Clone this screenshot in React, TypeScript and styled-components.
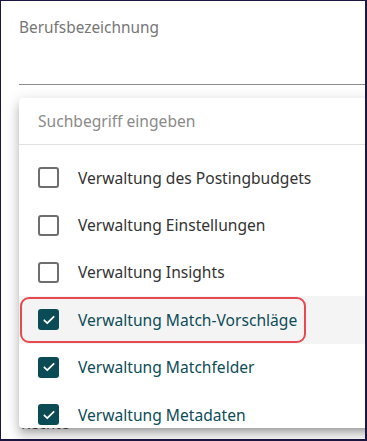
import React from 'react';
import styled, { createGlobalStyle } from 'styled-components';

const GlobalStyle = createGlobalStyle`
  html, body {
    margin: 0;
    padding: 0;
    background: #ffffff;
  }
  body {
    font-family: "Noto Sans", "Open Sans", sans-serif;
  }
`;

const Frame = styled.div`
  position: relative;
  width: 367px;
  height: 441px;
  box-sizing: border-box;
  border: 1px solid #1c1540;
  border-right-width: 2px;
  border-bottom-width: 2px;
  overflow: hidden;
  background: #fff;
`;

const Field = styled.div`
  padding: 17px 0 0 18px;
`;

const FieldLabel = styled.div`
  font-size: 15.4px;
  line-height: 20px;
  color: #767676;
`;

const Underline = styled.div`
  margin-top: 46px;
  height: 1px;
  background: #8c8c8c;
`;

const NextField = styled.div`
  padding: 328px 0 0 20px;
  font-size: 15px;
  line-height: 20px;
  color: #555;
`;

const Dropdown = styled.div`
  position: absolute;
  top: 97px;
  left: 18px;
  width: 370px;
  height: 330px;
  background: #fff;
  border-radius: 4px;
  overflow: hidden;
  box-shadow: 0 5px 5px -3px rgba(0, 0, 0, 0.2),
    0 8px 10px 1px rgba(0, 0, 0, 0.14), 0 3px 14px 2px rgba(0, 0, 0, 0.12);
`;

const Search = styled.div`
  height: 46px;
  display: flex;
  align-items: center;
  padding-left: 19px;
  font-size: 15.6px;
  color: #8a8a8a;
  border-bottom: 1px solid #e2e2e2;
`;

const List = styled.ul`
  list-style: none;
  margin: 0;
  padding: 9px 0 0;
`;

const Item = styled.li<{ $checked: boolean; $active?: boolean }>`
  position: relative;
  height: 47.4px;
  display: flex;
  align-items: center;
  gap: 19px;
  padding-left: 19px;
  font-size: 15.6px;
  color: ${p => (p.$checked ? '#0d4c57' : '#333333')};
  background: ${p => (p.$active ? '#f4f4f4' : 'transparent')};
`;

const Box = styled.span<{ $checked: boolean }>`
  width: 21px;
  height: 21px;
  box-sizing: border-box;
  border-radius: 3px;
  display: flex;
  align-items: center;
  justify-content: center;
  flex-shrink: 0;
  border: ${p => (p.$checked ? 'none' : '2px solid #6e6e6e')};
  background: ${p => (p.$checked ? '#0b4b55' : '#fff')};
`;

const Annotation = styled.span`
  position: absolute;
  left: 1px;
  top: 1px;
  width: 286px;
  height: 46px;
  box-sizing: border-box;
  border: 2.5px solid #e64a4f;
  border-radius: 9px;
  pointer-events: none;
`;

const Check = () => (
  <svg width="14" height="14" viewBox="0 0 24 24" fill="none">
    <path d="M4 12.5l5 5L20 6.5" stroke="#fff" strokeWidth="3" strokeLinecap="round" strokeLinejoin="round" />
  </svg>
);

const options = [
  { label: 'Verwaltung des Postingbudgets', checked: false },
  { label: 'Verwaltung Einstellungen', checked: false },
  { label: 'Verwaltung Insights', checked: false },
  { label: 'Verwaltung Match-Vorschläge', checked: true, active: true },
  { label: 'Verwaltung Matchfelder', checked: true },
  { label: 'Verwaltung Metadaten', checked: true },
];

export default function App() {
  return (
    <>
      <GlobalStyle />
      <Frame>
        <Field>
          <FieldLabel>Berufsbezeichnung</FieldLabel>
          <Underline />
        </Field>
        <NextField>Rechte</NextField>

        <Dropdown>
          <Search>Suchbegriff eingeben</Search>
          <List>
            {options.map(o => (
              <Item key={o.label} $checked={o.checked} $active={o.active}>
                <Box $checked={o.checked}>{o.checked && <Check />}</Box>
                {o.label}
                {o.active && <Annotation />}
              </Item>
            ))}
          </List>
        </Dropdown>
      </Frame>
    </>
  );
}
